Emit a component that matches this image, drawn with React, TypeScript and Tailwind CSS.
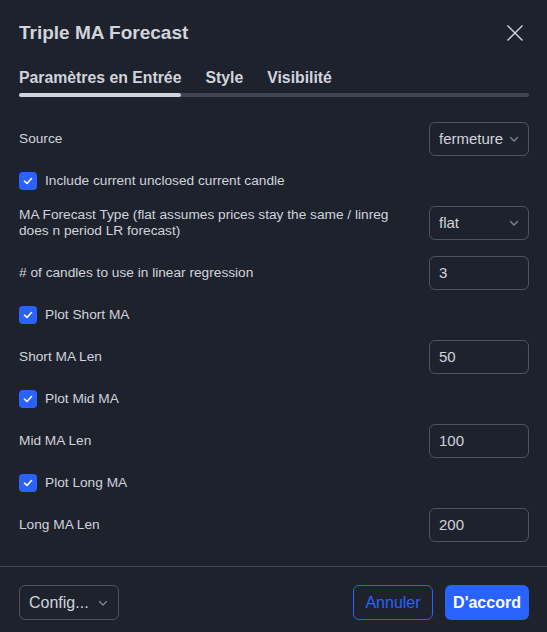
import React from "react";

const Chevron = () => (
  <svg width="12" height="12" viewBox="0 0 12 12" fill="none" className="text-[#868993]">
    <path d="M2.5 4.5 6 8l3.5-3.5" stroke="currentColor" strokeWidth="1.2" strokeLinecap="round" strokeLinejoin="round" />
  </svg>
);

const Checkbox = ({ label }: { label: string }) => (
  <div className="flex h-[18px] items-center gap-2">
    <span className="flex h-[18px] w-[18px] items-center justify-center rounded-[4px] bg-[#2962ff]">
      <svg width="12" height="12" viewBox="0 0 12 12" fill="none">
        <path d="M2.5 6.2 5 8.5l4.5-5" stroke="#ffffff" strokeWidth="1.6" strokeLinecap="round" strokeLinejoin="round" />
      </svg>
    </span>
    <span className="text-[13.7px] text-[#d1d4dc]">{label}</span>
  </div>
);

const Select = ({ value }: { value: string }) => (
  <div className="flex h-[34px] w-[100px] shrink-0 items-center justify-between rounded-md border border-[#50535e] pl-[9px] pr-[8px]">
    <span className="text-[15px] text-[#d1d4dc]">{value}</span>
    <Chevron />
  </div>
);

const Input = ({ value }: { value: string }) => (
  <div className="flex h-[34px] w-[100px] shrink-0 items-center rounded-md border border-[#50535e] px-[9px]">
    <span className="text-[15px] text-[#d1d4dc]">{value}</span>
  </div>
);

const Row = ({ label, children }: { label: React.ReactNode; children: React.ReactNode }) => (
  <div className="flex min-h-[34px] items-center justify-between gap-4">
    <span className="text-[13.7px] leading-[16px] text-[#d1d4dc]">{label}</span>
    {children}
  </div>
);

export default function App() {
  return (
    <div
      className="flex h-screen w-full flex-col bg-[#1e222d] text-[#d1d4dc]"
      style={{ fontFamily: '"Liberation Sans", Arial, sans-serif' }}
    >
      {/* Header */}
      <div className="flex items-center justify-between pl-[19px] pr-[18px] pt-[19px]">
        <h1 className="text-[19px] font-semibold leading-[28px]">Triple MA Forecast</h1>
        <svg width="18" height="18" viewBox="0 0 18 18" fill="none" className="mr-[5px]">
          <path d="M1.5 1.5l15 15M16.5 1.5l-15 15" stroke="#d1d4dc" strokeWidth="1.4" />
        </svg>
      </div>

      {/* Tabs */}
      <div className="pl-[19px] pr-[18px] pt-[21px]">
        <div className="flex gap-[24px] text-[15.8px] font-bold leading-[20px]">
          <span>Paramètres en Entrée</span>
          <span>Style</span>
          <span>Visibilité</span>
        </div>
        <div className="mt-[5px] flex h-[4px] w-full rounded-full bg-[#434651]">
          <div className="h-full w-[162px] rounded-full bg-[#d1d4dc]" />
        </div>
      </div>

      {/* Inputs */}
      <div className="flex flex-1 flex-col gap-4 pl-[19px] pr-[18px] pt-[25px]">
        <Row label="Source">
          <Select value="fermeture" />
        </Row>
        <Checkbox label="Include current unclosed current candle" />
        <Row
          label={
            <>
              MA Forecast Type (flat assumes prices stay the same / linreg
              <br />
              does n period LR forecast)
            </>
          }
        >
          <Select value="flat" />
        </Row>
        <Row label="# of candles to use in linear regression">
          <Input value="3" />
        </Row>
        <Checkbox label="Plot Short MA" />
        <Row label="Short MA Len">
          <Input value="50" />
        </Row>
        <Checkbox label="Plot Mid MA" />
        <Row label="Mid MA Len">
          <Input value="100" />
        </Row>
        <Checkbox label="Plot Long MA" />
        <Row label="Long MA Len">
          <Input value="200" />
        </Row>
      </div>

      {/* Footer */}
      <div className="flex items-center justify-between border-t border-[#434651] pb-[12px] pl-[19px] pr-[18px] pt-[18px]">
        <div className="flex h-[35px] w-[100px] items-center justify-between rounded-md border border-[#50535e] pl-[9px] pr-[9px]">
          <span className="text-[16px] text-[#d1d4dc]">Config...</span>
          <Chevron />
        </div>
        <div className="flex gap-3">
          <button className="h-[35px] w-[80px] rounded-md border border-[#2962ff] text-[16px] text-[#2962ff]">
            Annuler
          </button>
          <button className="h-[35px] w-[84px] rounded-md bg-[#2962ff] text-[16px] font-bold text-white">
            D'accord
          </button>
        </div>
      </div>
    </div>
  );
}
